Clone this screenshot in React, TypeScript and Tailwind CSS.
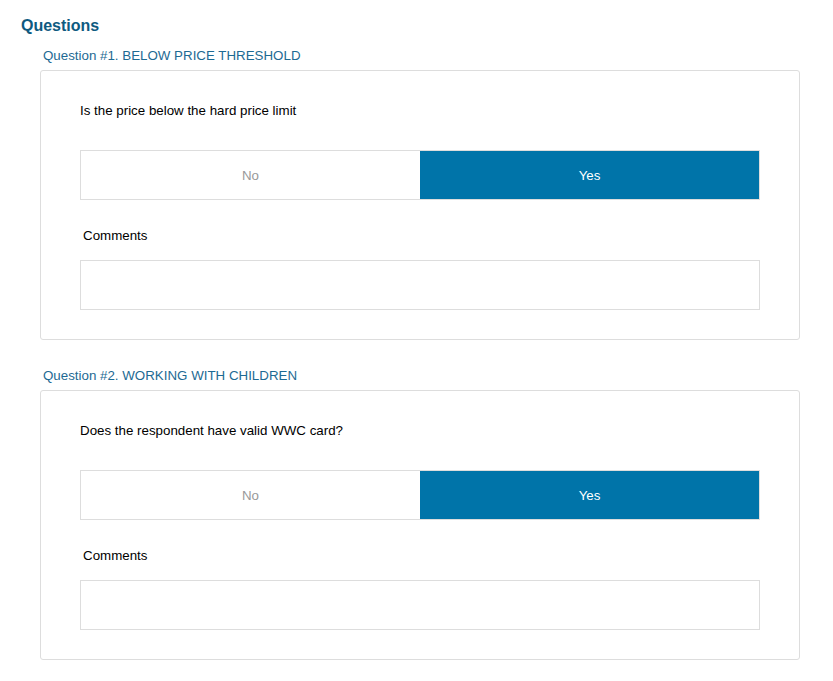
import React from "react";

type Q = { label: string; text: string };

const questions: Q[] = [
  { label: "Question #1. BELOW PRICE THRESHOLD", text: "Is the price below the hard price limit" },
  { label: "Question #2. WORKING WITH CHILDREN", text: "Does the respondent have valid WWC card?" },
];

function QuestionCard({ q, first }: { q: Q; first: boolean }) {
  return (
    <div className={first ? "" : "mt-[28px]"}>
      <div className="pl-[3px] text-[13.33px] leading-[16px] text-[#1d6a93] mb-[6px]">{q.label}</div>
      <div className="w-[760px] border border-[#dddddd] rounded-[3px] bg-white pt-[32px] pb-[29px] px-[39px]">
        <div className="text-[13.33px] leading-[16px] text-black">{q.text}</div>
        <div className="mt-[31px] flex h-[50px] border border-[#dddddd]">
          <div className="flex-1 flex items-center justify-center pt-[2px] text-[13.33px] text-[#999999]">No</div>
          <div className="flex-1 flex items-center justify-center pt-[2px] text-[13.33px] text-white bg-[#0074a9]">Yes</div>
        </div>
        <div className="mt-[28px] pl-[3px] text-[13.33px] leading-[16px] text-black">Comments</div>
        <div className="mt-[16px] h-[50px] border border-[#dddddd] bg-white"></div>
      </div>
    </div>
  );
}

export default function App() {
  return (
    <div className="min-h-[681px] bg-white pt-[16px]" style={{ fontFamily: '"Liberation Sans", Arial, sans-serif' }}>
      <div className="pl-[21px] text-[16px] leading-[20px] font-bold text-[#0e5a80]">Questions</div>
      <div className="pl-[40px] mt-[12px]">
        {questions.map((q, i) => (
          <QuestionCard key={i} q={q} first={i === 0} />
        ))}
      </div>
    </div>
  );
}
